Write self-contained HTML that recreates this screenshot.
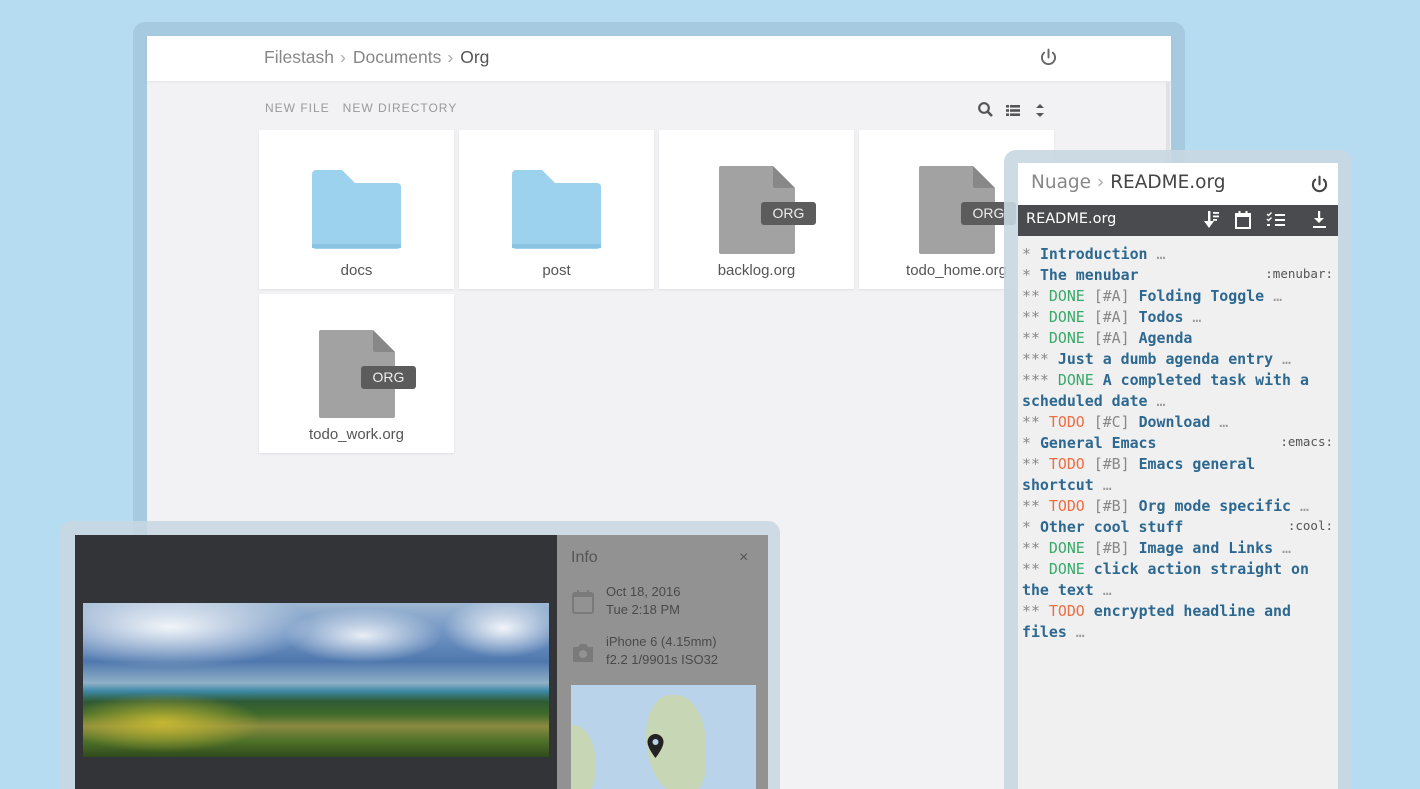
<!DOCTYPE html>
<html><head><meta charset="utf-8"><style>
*{margin:0;padding:0;box-sizing:border-box}
html,body{width:1420px;height:789px;overflow:hidden}
body{background:#b5dcf0;font-family:"Liberation Sans",sans-serif;position:relative}
.abs{position:absolute}
.frame{position:absolute;background:#a6cbe0;border-radius:12px 12px 0 0}
.card{position:absolute;background:#fff;width:195px;height:159px;box-shadow:0 1px 2px rgba(0,0,0,.08)}
.card .lbl{position:absolute;left:-10px;right:-10px;top:132px;text-align:center;font-size:15px;color:#555}
.org{font-family:"DejaVu Sans Mono",monospace;font-size:14.9px;color:#555;position:absolute;left:1022px}
.org div{height:21px;line-height:21px;white-space:pre}
.h{color:#2d6890;font-weight:bold}
.d{color:#3aa86b}.t{color:#ef6d43}.p{color:#888}.e{color:#999}
.tag{position:absolute;right:87px;font-family:"DejaVu Sans Mono",monospace;font-size:12.5px;color:#555;line-height:21px}
.chev{color:#aaa;margin:0 7px 0 6px}
</style></head><body>
<div class="frame" style="left:133px;top:22px;width:1052px;height:767px"></div>
<div class="abs" style="left:147px;top:36px;width:1024px;height:753px;background:#f2f2f4"></div>
<div class="abs" style="left:147px;top:36px;width:1024px;height:45px;background:#fff;box-shadow:0 1px 3px rgba(0,0,0,.06)"></div>
<div class="abs" style="left:264px;top:46px;font-size:17.5px;color:#888;line-height:22px;white-space:nowrap">Filestash<span class="chev">&#x203A;</span>Documents<span class="chev">&#x203A;</span><span style="color:#555">Org</span></div>
<svg class="abs" style="left:1038px;top:47px" width="21" height="21" viewBox="0 0 24 24"><path d="M12 3v9M7 6.5a7.5 7.5 0 1 0 10 0" fill="none" stroke="#666" stroke-width="2.2" stroke-linecap="round"/></svg>
<div class="abs" style="left:1166px;top:82px;width:4px;height:450px;background:#e2e2e4"></div>
<div class="abs" style="left:265px;top:101px;font-size:12px;color:#999;letter-spacing:1px">NEW FILE&nbsp;&nbsp;&nbsp;NEW DIRECTORY</div>
<svg class="abs" style="left:977px;top:101px" width="72" height="18" viewBox="0 0 72 18"><circle cx="7" cy="7" r="4.8" fill="none" stroke="#555" stroke-width="2.2"/><path d="M10.5 10.5l4.5 4.5" stroke="#555" stroke-width="2.6"/><g fill="#555"><rect x="29" y="4" width="3" height="2.6"/><rect x="33" y="4" width="10" height="2.6"/><rect x="29" y="8.2" width="3" height="2.6"/><rect x="33" y="8.2" width="10" height="2.6"/><rect x="29" y="12.4" width="3" height="2.6"/><rect x="33" y="12.4" width="10" height="2.6"/><path d="M63 3l4 4h-8zM63 16l4-4h-8z"/></g></svg>
<div class="card" style="left:259px;top:130px"><svg class="abs" style="left:53px;top:40px" width="89" height="79" viewBox="0 0 89 79"><path d="M0 4a4 4 0 0 1 4-4h26l13 13h42a4 4 0 0 1 4 4v58a4 4 0 0 1-4 4H4a4 4 0 0 1-4-4z" fill="#9dd2ee"/><rect x="0" y="74" width="89" height="4" fill="#8bc3e2"/></svg><div class="lbl">docs</div></div>
<div class="card" style="left:459px;top:130px"><svg class="abs" style="left:53px;top:40px" width="89" height="79" viewBox="0 0 89 79"><path d="M0 4a4 4 0 0 1 4-4h26l13 13h42a4 4 0 0 1 4 4v58a4 4 0 0 1-4 4H4a4 4 0 0 1-4-4z" fill="#9dd2ee"/><rect x="0" y="74" width="89" height="4" fill="#8bc3e2"/></svg><div class="lbl">post</div></div>
<div class="card" style="left:659px;top:130px"><svg class="abs" style="left:60px;top:36px" width="100" height="90" viewBox="0 0 100 90"><path d="M2 0h52l22 22v64a2 2 0 0 1-2 2H2a2 2 0 0 1-2-2V2a2 2 0 0 1 2-2z" fill="#a2a2a2"/><path d="M54 0v20a2 2 0 0 0 2 2h20z" fill="#888"/><rect x="42" y="36" width="55" height="23" rx="3" fill="#5c5c5c"/><text x="69.5" y="52" text-anchor="middle" font-family="Liberation Sans" font-size="14" fill="#eee">ORG</text></svg><div class="lbl">backlog.org</div></div>
<div class="card" style="left:859px;top:130px"><svg class="abs" style="left:60px;top:36px" width="100" height="90" viewBox="0 0 100 90"><path d="M2 0h52l22 22v64a2 2 0 0 1-2 2H2a2 2 0 0 1-2-2V2a2 2 0 0 1 2-2z" fill="#a2a2a2"/><path d="M54 0v20a2 2 0 0 0 2 2h20z" fill="#888"/><rect x="42" y="36" width="55" height="23" rx="3" fill="#5c5c5c"/><text x="69.5" y="52" text-anchor="middle" font-family="Liberation Sans" font-size="14" fill="#eee">ORG</text></svg><div class="lbl">todo_home.org</div></div>
<div class="card" style="left:259px;top:294px"><svg class="abs" style="left:60px;top:36px" width="100" height="90" viewBox="0 0 100 90"><path d="M2 0h52l22 22v64a2 2 0 0 1-2 2H2a2 2 0 0 1-2-2V2a2 2 0 0 1 2-2z" fill="#a2a2a2"/><path d="M54 0v20a2 2 0 0 0 2 2h20z" fill="#888"/><rect x="42" y="36" width="55" height="23" rx="3" fill="#5c5c5c"/><text x="69.5" y="52" text-anchor="middle" font-family="Liberation Sans" font-size="14" fill="#eee">ORG</text></svg><div class="lbl">todo_work.org</div></div>

<div class="frame" style="left:60px;top:521px;width:720px;height:268px;background:rgba(200,215,225,.85)"></div>
<div class="abs" style="left:75px;top:535px;width:482px;height:254px;background:#323437"></div>
<div class="abs" style="left:83px;top:603px;width:466px;height:154px;overflow:hidden;background:linear-gradient(180deg,#9fb8d3 0%,#6f93c2 20%,#4f78ae 38%,#8fb0c6 52%,#3f8aa8 57%,#2f5a35 64%,#3f6a2a 72%,#8a8a40 80%,#4d7028 90%,#2f4a1c 100%)">
<div class="abs" style="left:-30px;top:-10px;width:260px;height:75px;background:radial-gradient(ellipse at 45% 45%,rgba(255,255,255,.9),rgba(255,255,255,0) 70%)"></div>
<div class="abs" style="left:200px;top:5px;width:160px;height:55px;background:radial-gradient(ellipse,rgba(255,255,255,.85),rgba(255,255,255,0) 70%)"></div>
<div class="abs" style="left:360px;top:-5px;width:120px;height:60px;background:radial-gradient(ellipse,rgba(255,255,255,.9),rgba(255,255,255,0) 70%)"></div>
<div class="abs" style="left:-20px;top:90px;width:200px;height:60px;background:radial-gradient(ellipse,rgba(200,185,50,.95),rgba(200,185,50,0) 70%)"></div>
</div>
<div class="abs" style="left:557px;top:535px;width:211px;height:254px;background:#929292"></div>
<div class="abs" style="left:571px;top:549px;font-size:16px;color:#555">Info</div>
<div class="abs" style="left:739px;top:549px;font-size:16px;color:#555">×</div>
<svg class="abs" style="left:571px;top:589px" width="26" height="26" viewBox="0 0 26 26"><rect x="2" y="4" width="20" height="20" rx="2" fill="none" stroke="#7a7a7a" stroke-width="2"/><rect x="2" y="4" width="20" height="4" fill="#7a7a7a"/><rect x="6" y="1" width="2" height="5" fill="#7a7a7a"/><rect x="16" y="1" width="2" height="5" fill="#7a7a7a"/></svg>
<div class="abs" style="left:606px;top:583px;font-size:13px;color:#4a4a4a;line-height:18px">Oct 18, 2016<br>Tue 2:18 PM</div>
<svg class="abs" style="left:571px;top:641px" width="26" height="24" viewBox="0 0 26 24"><path d="M2 6h5l2-3h6l2 3h5v15H2z" fill="#7a7a7a"/><circle cx="12" cy="13" r="4" fill="#929292"/></svg>
<div class="abs" style="left:606px;top:633px;font-size:13px;color:#4a4a4a;line-height:18px">iPhone 6 (4.15mm)<br>f2.2 1/9901s ISO32</div>
<div class="abs" style="left:571px;top:685px;width:185px;height:104px;background:#b9d3ea;overflow:hidden">
<div class="abs" style="left:75px;top:10px;width:60px;height:100px;background:#c7d6b5;border-radius:40% 50% 30% 60%"></div>
<div class="abs" style="left:-20px;top:40px;width:45px;height:80px;background:#c7d6b5;border-radius:50%"></div>
</div>
<svg class="abs" style="left:646px;top:733px" width="19" height="27" viewBox="0 0 19 27"><path d="M9.5 1a8 8 0 0 0-8 8c0 6 8 16 8 16s8-10 8-16a8 8 0 0 0-8-8z" fill="#222"/><circle cx="9.5" cy="9" r="3" fill="#b9d3ea"/></svg>

<div class="frame" style="left:1004px;top:150px;width:348px;height:639px;background:rgba(200,215,225,.9)"></div>
<div class="abs" style="left:1018px;top:163px;width:320px;height:626px;background:#f0f0f0"></div>
<div class="abs" style="left:1018px;top:163px;width:320px;height:42px;background:#fff"></div>
<div class="abs" style="left:1031px;top:172px;font-family:'DejaVu Sans',sans-serif;font-size:18.5px;color:#888;white-space:nowrap">Nuage <span style="color:#aaa">&#x203A;</span> <span style="color:#444">README.org</span></div>
<svg class="abs" style="left:1309px;top:174px" width="21" height="21" viewBox="0 0 24 24"><path d="M12 3v9M7 6.5a7.5 7.5 0 1 0 10 0" fill="none" stroke="#444" stroke-width="2.4" stroke-linecap="round"/></svg>
<div class="abs" style="left:1018px;top:205px;width:320px;height:31px;background:#4a4b4e"></div>
<div class="abs" style="left:1026px;top:211px;font-family:'DejaVu Sans',sans-serif;font-size:14.5px;color:#fff">README.org</div>
<svg class="abs" style="left:1200px;top:209px" width="132" height="22" viewBox="0 0 132 22"><g fill="#fff"><rect x="8" y="2" width="2.4" height="12"/><path d="M4 12h10l-5 7z"/><rect x="13" y="3" width="6" height="1.8"/><rect x="13" y="6.5" width="6" height="1.8"/><rect x="13" y="10" width="4" height="1.8"/></g><rect x="36" y="5" width="14" height="14" fill="none" stroke="#fff" stroke-width="2"/><rect x="36" y="5" width="14" height="3" fill="#fff"/><rect x="38.5" y="2" width="2" height="4" fill="#fff"/><rect x="45.5" y="2" width="2" height="4" fill="#fff"/><g fill="#fff"><rect x="75" y="5" width="10" height="2"/><rect x="75" y="10" width="10" height="2"/><rect x="75" y="15" width="10" height="2"/><path d="M67 5l1.5 1.5 3-3" stroke="#fff" stroke-width="1.4" fill="none"/><path d="M67 10l1.5 1.5 3-3" stroke="#fff" stroke-width="1.4" fill="none"/><rect x="67" y="15" width="3" height="2"/><rect x="118" y="2" width="2.2" height="10"/><path d="M114 9h10l-5 5z"/><rect x="113" y="17" width="13" height="2"/></g></svg>

<div class="org" style="top:244px"><div><span class="p">*</span> <span class="h">Introduction</span> <span class="e">…</span></div><div><span class="p">*</span> <span class="h">The menubar</span></div><div><span class="p">**</span> <span class="d">DONE</span> <span class="p">[#A]</span> <span class="h">Folding Toggle</span> <span class="e">…</span></div><div><span class="p">**</span> <span class="d">DONE</span> <span class="p">[#A]</span> <span class="h">Todos</span> <span class="e">…</span></div><div><span class="p">**</span> <span class="d">DONE</span> <span class="p">[#A]</span> <span class="h">Agenda</span></div><div><span class="p">***</span> <span class="h">Just a dumb agenda entry</span> <span class="e">…</span></div><div><span class="p">***</span> <span class="d">DONE</span> <span class="h">A completed task with a</span></div><div><span class="h">scheduled date</span> <span class="e">…</span></div><div><span class="p">**</span> <span class="t">TODO</span> <span class="p">[#C]</span> <span class="h">Download</span> <span class="e">…</span></div><div><span class="p">*</span> <span class="h">General Emacs</span></div><div><span class="p">**</span> <span class="t">TODO</span> <span class="p">[#B]</span> <span class="h">Emacs general</span></div><div><span class="h">shortcut</span> <span class="e">…</span></div><div><span class="p">**</span> <span class="t">TODO</span> <span class="p">[#B]</span> <span class="h">Org mode specific</span> <span class="e">…</span></div><div><span class="p">*</span> <span class="h">Other cool stuff</span></div><div><span class="p">**</span> <span class="d">DONE</span> <span class="p">[#B]</span> <span class="h">Image and Links</span> <span class="e">…</span></div><div><span class="p">**</span> <span class="d">DONE</span> <span class="h">click action straight on</span></div><div><span class="h">the text</span> <span class="e">…</span></div><div><span class="p">**</span> <span class="t">TODO</span> <span class="h">encrypted headline and</span></div><div><span class="h">files</span> <span class="e">…</span></div></div>
<div class="tag" style="top:263px">:menubar:</div>
<div class="tag" style="top:431px">:emacs:</div>
<div class="tag" style="top:515px">:cool:</div>
</body></html>
